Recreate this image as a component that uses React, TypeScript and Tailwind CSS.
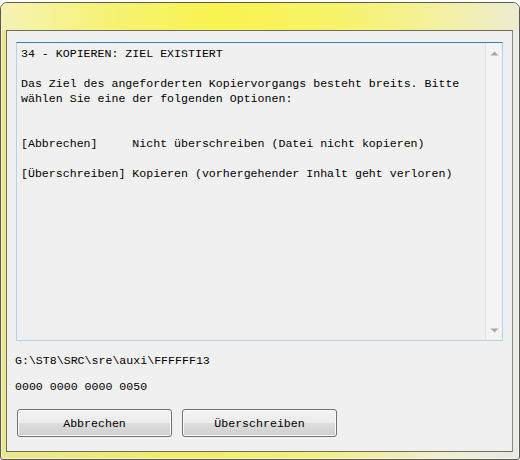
const lines = [
    '34 - KOPIEREN: ZIEL EXISTIERT',
    '',
    'Das Ziel des angeforderten Kopiervorgangs besteht breits. Bitte',
    'wählen Sie eine der folgenden Optionen:',
    '',
    '',
    '[Abbrechen]     Nicht überschreiben (Datei nicht kopieren)',
    '',
    '[Überschreiben] Kopieren (vorhergehender Inhalt geht verloren)',
]

function Arrow({ up }: { up?: boolean }) {
    return (
        <svg width="9" height="5" viewBox="0 0 9 5">
            <path
                d={up ? 'M0.5 4.5 L4.5 0.5 L8.5 4.5 Z' : 'M0.5 0.5 L4.5 4.5 L8.5 0.5 Z'}
                fill="#a6a6a6"
            />
        </svg>
    )
}

function Button({ label }: { label: string }) {
    return (
        <button className="w-[155px] h-[28px] rounded-[3px] border border-[#707070] bg-[linear-gradient(to_bottom,#f2f2f2_0%,#ebebeb_50%,#dddddd_51%,#cfcfcf_100%)] shadow-[inset_0_0_0_1px_#fcfcfc] text-black">
            {label}
        </button>
    )
}

export default function App() {
    return (
        <div className="w-[520px] h-[460px] bg-white pt-[2px] font-['Liberation_Mono',monospace] text-[11.6px] leading-[15px] text-black">
            <div className="w-[520px] h-[458px] rounded-t-[7px] rounded-b-[3px] border border-[#5a5a52] bg-[linear-gradient(to_right,#ebe78e_0%,#f0ec6c_35%,#f3ef80_60%,#efeed0_85%,#e9e9e6_100%)] shadow-[inset_0_0_0_1px_rgba(255,255,255,0.55)] flex flex-col overflow-hidden">
                <div className="h-[27px] shrink-0 bg-[linear-gradient(to_right,#f5f3b6_0%,#f6f276_20%,#f8f34e_42%,#f7f36a_65%,#f3f0a4_86%,#ecebd2_100%)]" />
                <div className="ml-[5px] w-[507px] h-[422px] border border-[#6f6d55] border-r-[#8a8a84] bg-[#f0f0f0] flex flex-col">
                    <div className="ml-[9px] mt-[11px] w-[487px] h-[299px] border border-[#b4d2ea] border-t-[#3d7eb2] flex">
                        <div className="flex-1 pl-[4px] pt-[3px] whitespace-pre">
                            {lines.map((l, i) => (
                                <div key={i} className="h-[15px]">
                                    {l}
                                </div>
                            ))}
                        </div>
                        <div className="w-[17px] border-l border-[#e4e4e4] bg-[#f3f3f3] flex flex-col items-center justify-between pt-[8px] pb-[7px]">
                            <Arrow up />
                            <Arrow />
                        </div>
                    </div>
                    <div className="ml-[8px] mt-[12px] h-[15px]">
                        G:\ST8\SRC\sre\auxi\FFFFFF13
                    </div>
                    <div className="ml-[8px] mt-[11px] h-[15px]">
                        0000 0000 0000 0050
                    </div>
                    <div className="ml-[10px] mt-[15px] flex gap-[10px]">
                        <Button label="Abbrechen" />
                        <Button label="Überschreiben" />
                    </div>
                </div>
            </div>
        </div>
    )
}
